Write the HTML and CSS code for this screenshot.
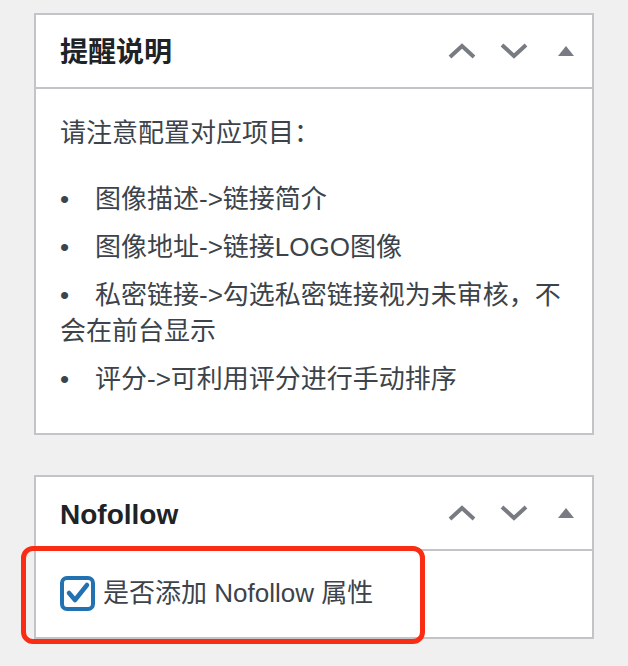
FILE: index.html
```html
<!DOCTYPE html>
<html lang="zh-CN">
<head>
  <meta charset="UTF-8">
  <meta name="viewport" content="width=device-width, initial-scale=1.0">
  <title>链接设置</title>
  <link rel="stylesheet" href="styles.css">
</head>
<body>
  <div class="postbox">
    <div class="postbox-header">
      <h2 class="hndle">提醒说明</h2>
      <div class="handle-actions">
        <button class="handle-btn" aria-label="上移">
          <svg width="28" height="16" viewBox="0 0 28 16"><polyline points="2,14 14,3 26,14" /></svg>
        </button>
        <button class="handle-btn" aria-label="下移">
          <svg width="28" height="16" viewBox="0 0 28 16"><polyline points="2,2 14,13 26,2" /></svg>
        </button>
        <button class="handle-btn" aria-label="折叠">
          <svg class="tri" width="16" height="10" viewBox="0 0 16 10"><polygon points="0,10 8,0 16,10" /></svg>
        </button>
      </div>
    </div>
    <div class="inside">
      <p>请注意配置对应项目：</p>
      <ul class="tips">
        <li>图像描述-&gt;链接简介</li>
        <li>图像地址-&gt;链接LOGO图像</li>
        <li>私密链接-&gt;勾选私密链接视为未审核，不会在前台显示</li>
        <li>评分-&gt;可利用评分进行手动排序</li>
      </ul>
    </div>
  </div>

  <div class="postbox postbox-nofollow">
    <div class="postbox-header">
      <h2 class="hndle">Nofollow</h2>
      <div class="handle-actions">
        <button class="handle-btn" aria-label="上移">
          <svg width="28" height="16" viewBox="0 0 28 16"><polyline points="2,14 14,3 26,14" /></svg>
        </button>
        <button class="handle-btn" aria-label="下移">
          <svg width="28" height="16" viewBox="0 0 28 16"><polyline points="2,2 14,13 26,2" /></svg>
        </button>
        <button class="handle-btn" aria-label="折叠">
          <svg class="tri" width="16" height="10" viewBox="0 0 16 10"><polygon points="0,10 8,0 16,10" /></svg>
        </button>
      </div>
    </div>
    <div class="inside inside-check">
      <label class="check-label">
        <span class="checkbox">
          <svg width="27" height="27" viewBox="0 0 27 27"><polyline points="5,13 11,20 23,5" /></svg>
        </span>
        是否添加 Nofollow 属性
      </label>
    </div>
    <div class="highlight"></div>
  </div>
</body>
</html>
```

FILE: styles.css
```css
body { margin: 0; padding: 13px 34px; background: #f0f0f1; font-family: "Liberation Sans", "Noto Sans CJK SC", sans-serif; color: #3c434a; }

.postbox { position: relative; background: #fff; border: 2px solid #c3c4c7; margin-bottom: 40px; }
.postbox-header { display: flex; align-items: center; justify-content: space-between; border-bottom: 2px solid #c3c4c7; height: 72px; }
.hndle { margin: 0; padding: 3px 24px 0; font-size: 28px; line-height: 40px; font-weight: 700; color: #1d2327; }

.handle-actions { display: flex; }
.handle-btn { width: 52px; height: 72px; padding: 0; border: none; background: none; display: flex; align-items: center; justify-content: center; cursor: pointer; }
.handle-btn svg polyline { fill: none; stroke: #787c82; stroke-width: 4; }
.handle-btn .tri polygon { fill: #787c82; }

.inside { padding: 0 24px 24px; font-size: 26px; line-height: 36px; }
.inside p { margin: 0; padding-top: 26px; }
.tips { list-style: none; margin: 30px 0 0; padding: 0; }
.tips li { margin-bottom: 12px; }
.tips li::before { content: "•"; display: inline-block; width: 35px; }

.inside-check { padding: 25px 24px 26px; }
.check-label { display: flex; align-items: center; line-height: 35px; }
.checkbox { width: 35px; height: 35px; box-sizing: border-box; border: 4px solid #2271b1; border-radius: 7px; margin-right: 8px; display: flex; align-items: center; justify-content: center; }
.checkbox polyline { fill: none; stroke: #2271b1; stroke-width: 4.5; stroke-linecap: round; stroke-linejoin: round; }

.highlight { position: absolute; left: -15px; top: 69px; width: 404px; height: 98px; box-sizing: border-box; border: 5px solid #fb2c14; border-radius: 12px; }
```
